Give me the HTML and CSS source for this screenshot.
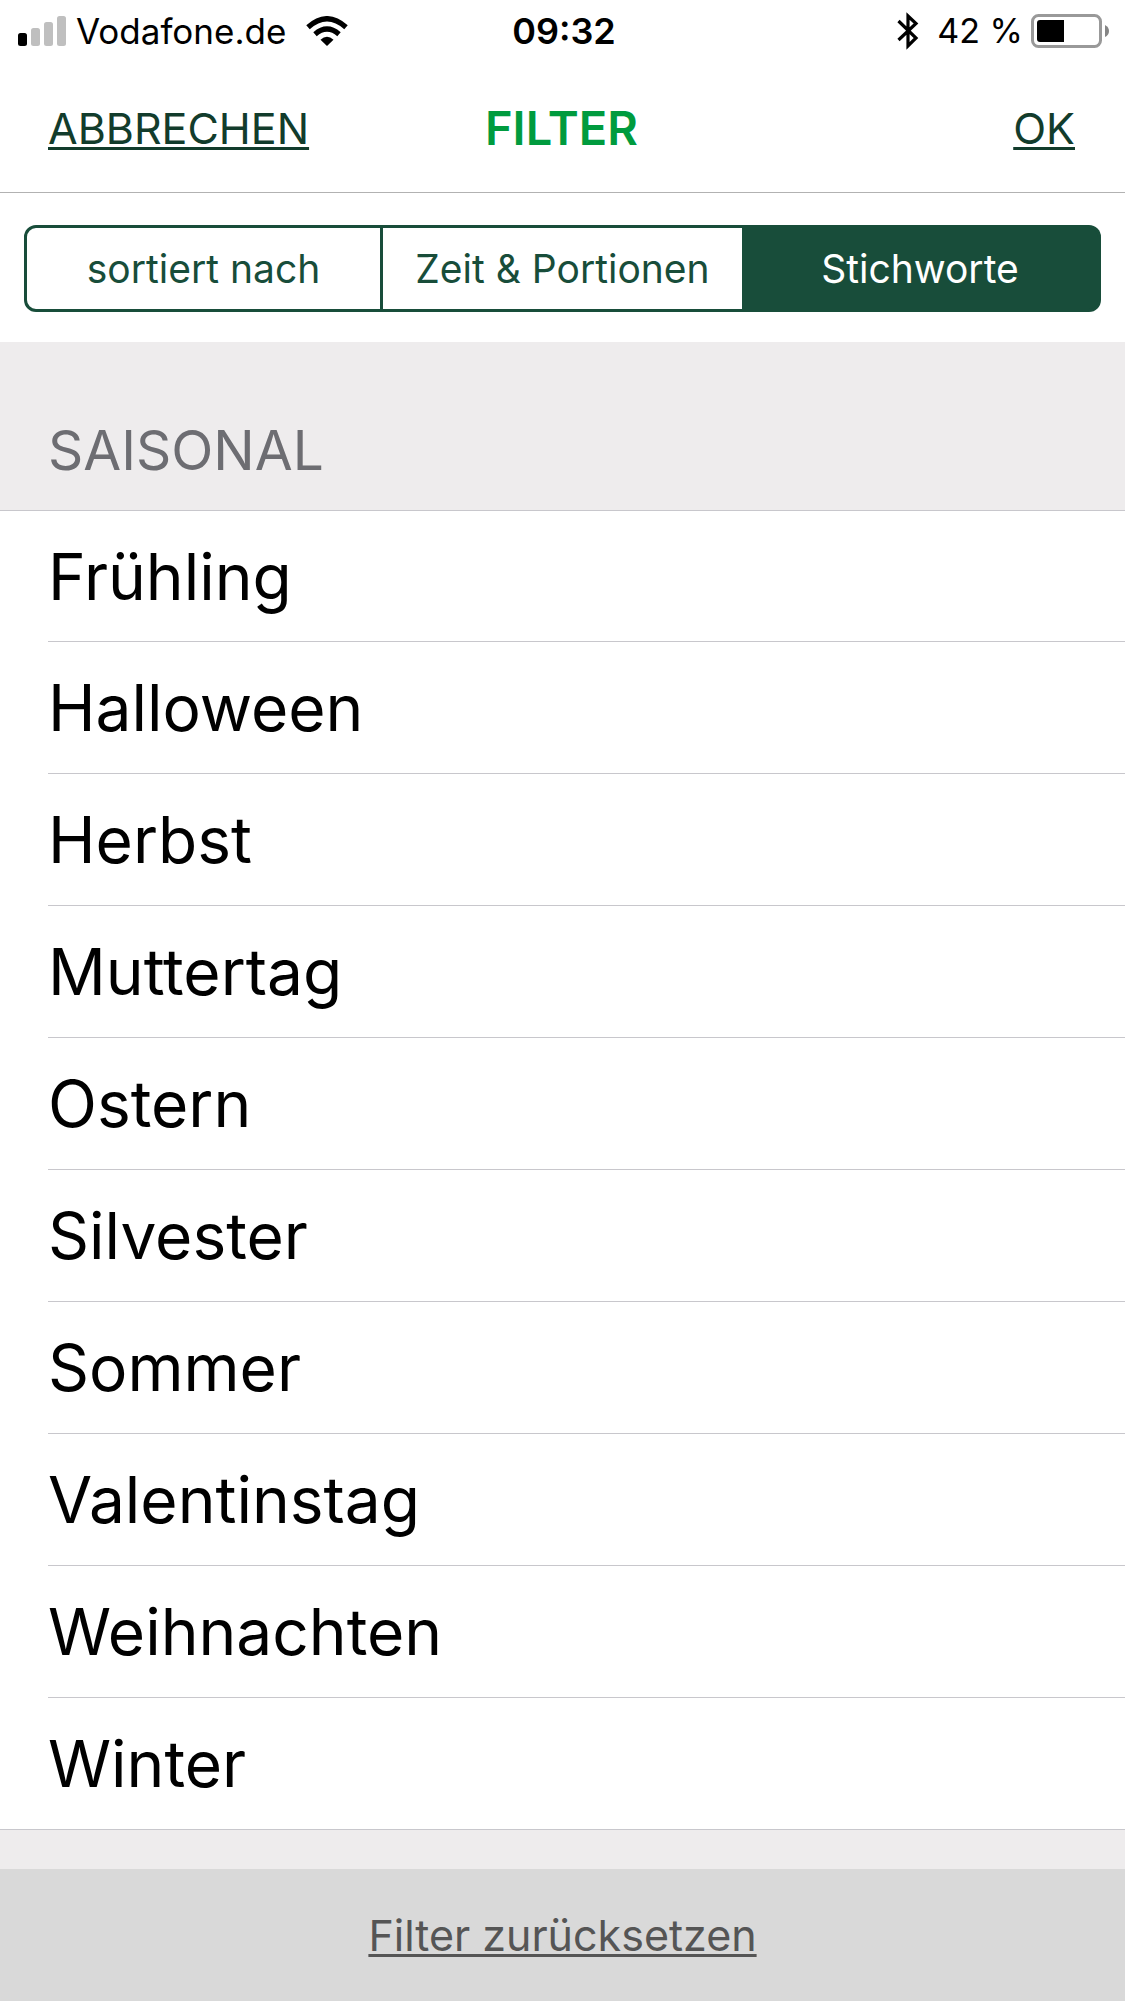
FILE: index.html
```html
<!DOCTYPE html>
<html lang="de">
<head>
<meta charset="utf-8">
<meta name="viewport" content="width=device-width, initial-scale=1">
<title>Filter</title>
<link rel="stylesheet" href="styles.css">
</head>
<body>
<div class="status">
  <div class="status-side">
    <svg class="signal" width="48" height="30" viewBox="0 0 48 30" aria-hidden="true">
      <rect x="0" y="17" width="9" height="13" rx="2.5"/>
      <g fill="#bfbfbf"><rect x="13" y="12" width="9" height="18" rx="2.5"/><rect x="26" y="6" width="9" height="24" rx="2.5"/><rect x="39" y="0" width="9" height="30" rx="2.5"/></g>
    </svg>
    <span class="carrier">Vodafone.de</span>
    <svg width="42" height="30" viewBox="0 0 42 30" aria-hidden="true">
      <path d="M21 30L14.5 23.700Q21 18 27.500 23.700Z"/>
      <path d="M9 18.200Q21 7.800 33 18.200M2 11.200Q21-5.800 40 11.200" fill="none" stroke="#000" stroke-width="5.200"/>
    </svg>
  </div>
  <time class="clock">09:32</time>
  <div class="status-side status-end">
    <svg class="bluetooth" width="22" height="38" viewBox="0 0 22 38" aria-hidden="true">
      <path d="M1.500 9L19 26L11 34V4L19 11.500L1.500 28" fill="none" stroke="#000" stroke-width="3.200"/>
    </svg>
    <span>42 %</span>
    <svg class="battery" width="79" height="34" viewBox="0 0 79 34" aria-hidden="true">
      <rect x="1.500" y="1.500" width="68" height="31" rx="6" fill="none" stroke="#999" stroke-width="3"/>
      <path d="M9 6H33V28H9Q6 28 6 25V9Q6 6 9 6Z"/>
      <path d="M74 11Q78 13 78 17T74 23Z" fill="#858585"/>
    </svg>
  </div>
</div>
<header class="nav">
  <button type="button" class="link">ABBRECHEN</button>
  <h1 class="title">FILTER</h1>
  <button type="button" class="link link-end">OK</button>
</header>
<main>
  <div class="segments-bar">
    <div class="segments" role="tablist">
      <button type="button" role="tab" aria-selected="false" class="segment">sortiert nach</button>
      <button type="button" role="tab" aria-selected="false" class="segment">Zeit &amp; Portionen</button>
      <button type="button" role="tab" aria-selected="true" class="segment segment-active">Stichworte</button>
    </div>
  </div>
  <h2 class="section">SAISONAL</h2>
  <ul class="list">
    <li><button type="button" class="row">Frühling</button></li>
    <li><button type="button" class="row">Halloween</button></li>
    <li><button type="button" class="row">Herbst</button></li>
    <li><button type="button" class="row">Muttertag</button></li>
    <li><button type="button" class="row">Ostern</button></li>
    <li><button type="button" class="row">Silvester</button></li>
    <li><button type="button" class="row">Sommer</button></li>
    <li><button type="button" class="row">Valentinstag</button></li>
    <li><button type="button" class="row">Weihnachten</button></li>
    <li><button type="button" class="row">Winter</button></li>
  </ul>
</main>
<footer class="footer">
  <button type="button" class="link reset">Filter zurücksetzen</button>
</footer>
</body>
</html>
```
FILE: styles.css
```css
* { box-sizing: border-box; }

body {
  margin: 0;
  min-height: 100vh;
  display: flex;
  flex-direction: column;
  background: #eeeced;
  color: #000;
  font-family: Inter, "Liberation Sans", sans-serif;
}

button {
  margin: 0;
  padding: 0;
  border: 0;
  background: none;
  color: inherit;
  font: inherit;
  cursor: pointer;
}

.status {
  display: grid;
  grid-template-columns: 1fr auto 1fr;
  align-items: center;
  height: 60px;
  padding: 1px 15px 0 18px;
  background: #fff;
  font-size: 35px;
  line-height: 60px;
}

.status-side { display: flex; align-items: center; }
.status-end { justify-content: flex-end; }
.signal { margin-right: 10px; }
.carrier { margin-right: 20px; }
.bluetooth { margin-right: 18px; }
.battery { margin-left: 8px; }
.clock { font-size: 36px; font-weight: 600; }
.status-end { font-size: 34px; }

.nav {
  display: grid;
  grid-template-columns: 1fr auto 1fr;
  align-items: center;
  height: 133px;
  padding: 3px 50px 0 48px;
  border-bottom: 1px solid #b2b2b2;
  background: #fff;
}

.link {
  justify-self: start;
  color: #123c2c;
  font-size: 43px;
  line-height: 56px;
  text-decoration: underline 3px;
  text-underline-offset: 3px;
  text-decoration-skip-ink: none;
}

.link-end { justify-self: end; }

.title {
  margin: 0;
  color: #009b3e;
  font-size: 47px;
  font-weight: 600;
  line-height: 56px;
}

.segments-bar { padding: 32px 24px 30px; background: #fff; }

.segments {
  display: grid;
  grid-template-columns: repeat(3, 1fr);
  height: 87px;
}

.segment {
  border: solid #184d3a;
  border-width: 3px 0;
  color: #184d3a;
  font-size: 39px;
}

.segment:first-child {
  border-width: 3px;
  border-radius: 12px 0 0 12px;
}

.segment:last-child {
  border-right-width: 3px;
  border-radius: 0 12px 12px 0;
}

.segment-active { background: #184d3a; color: #fff; }

.section {
  margin: 0;
  padding: 76px 48px 28px;
  color: #6d6d72;
  font-size: 55px;
  font-weight: 400;
  line-height: 64px;
}

.list {
  margin: 0;
  padding: 0 0 0 48px;
  list-style: none;
  background: #fff;
  border: solid #c8c7cc;
  border-width: 1px 0;
}

.row {
  display: block;
  width: 100%;
  height: 132px;
  border-bottom: 1px solid #c8c7cc;
  font-size: 64px;
  text-align: left;
}

.list li:first-child .row { height: 131px; }
.list li:last-child .row { height: 131px; border-bottom: 0; }

.footer {
  display: flex;
  align-items: center;
  justify-content: center;
  height: 132px;
  margin-top: auto;
  background: #d9d9d9;
}

.reset { color: #555; }
```
